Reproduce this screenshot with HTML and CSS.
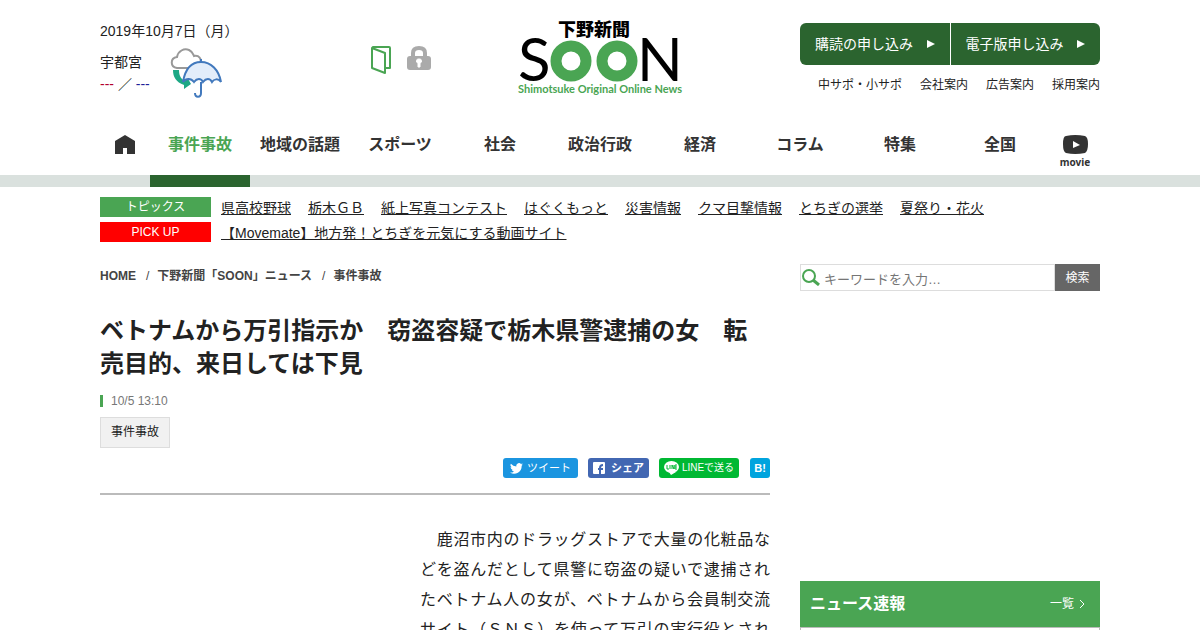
FILE: index.html
```html
<!DOCTYPE html>
<html lang="ja">

<head>
    <meta charset="utf-8">
    <meta name="viewport" content="width=device-width, initial-scale=1.0">
    <title>下野新聞 SOON</title>
    <link rel="stylesheet" href="styles.css">
</head>

<body>

    <header class="container header">
        <div class="header-left">
            <div class="info">
                <p class="date">2019年10月7日（月）</p>
                <div class="weather">
                    <div>
                        <p>宇都宮</p>
                        <p><span class="high">---</span> ／ <span class="low">---</span></p>
                    </div>
                    <svg class="weather-icon" width="52" height="50" viewBox="0 0 52 50" fill="none">
                        <path d="M7 20c-7-1-7-10 0-11C8 3 14 0 19 2c4 2 4 4 5 6 5-1 8 3 6 7l-9 5z" fill="#fff" stroke="#999" stroke-width="2" />
                        <path d="M3 22h6c0 6 2 9 6 11l2-4 4 7-7 5v-4C6 34 3 29 3 22z" fill="#1da885" />
                        <path d="M13 34c2-12 8-20 18-20s18 8 20 20c-3-4-7-3-9 0-2-4-6-4-9 0-2-4-6-4-9 0-3-4-8-4-11 0z" fill="#e3edfa" stroke="#4279bd" stroke-width="2" />
                        <path d="M31 11v3M31 34v11c0 5-6 5-6 0" stroke="#4279bd" stroke-width="2" />
                    </svg>
                </div>
            </div>
            <div class="tools">
                <a href="#" aria-label="紙面"><svg width="21" height="28" viewBox="0 0 21 28" fill="none" stroke="#4aa553" stroke-width="2" stroke-linejoin="round">
                        <path d="M1 2l13 5v20L1 22zM1 2l1-1h16q1 0 1 1v20h-5" />
                    </svg></a>
                <a href="#" aria-label="ログイン"><svg width="24" height="24" viewBox="0 0 24 24">
                        <path d="M6 12V7q0-5 6-5t6 5v5" fill="none" stroke="#aaa" stroke-width="4" />
                        <rect y="10" width="24" height="14" rx="3" fill="#aaa" />
                        <path d="M12 13a2 2 0 0 1 1 4v4h-2v-4a2 2 0 0 1 1-4z" fill="#fff" stroke="#fff" />
                    </svg></a>
            </div>
        </div>

        <a class="logo" href="#" aria-label="下野新聞 SOON">
            <svg width="160" height="74" viewBox="0 0 160 74">
                <text class="logo-paper" x="38" y="14">下野新聞</text>
                <text class="logo-letter" x="-2" y="59">S</text>
                <circle cx="51" cy="39" r="15" fill="none" stroke="#4aa553" stroke-width="11" />
                <circle cx="97" cy="39" r="15" fill="none" stroke="#4aa553" stroke-width="11" />
                <text class="logo-letter" x="117" y="59">N</text>
                <text class="logo-sub" x="-2" y="71">Shimotsuke Original Online News</text>
            </svg>
        </a>

        <div class="header-right">
            <div class="apply">
                <a href="#">購読の申し込み<svg width="8" height="8"><path d="M0 0l8 4-8 4z" fill="#fff" /></svg></a>
                <a href="#">電子版申し込み<svg width="8" height="8"><path d="M0 0l8 4-8 4z" fill="#fff" /></svg></a>
            </div>
            <div class="sublinks">
                <a href="#">中サポ・小サポ</a>
                <a href="#">会社案内</a>
                <a href="#">広告案内</a>
                <a href="#">採用案内</a>
            </div>
        </div>
    </header>

    <nav class="gnav">
        <div class="container gnav-list">
            <a class="small" href="#" aria-label="ホーム"><svg width="20" height="19" viewBox="0 0 20 19">
                    <path d="M10 0l10 6v13h-8v-6H8v6H0V6z" fill="#333" />
                </svg></a>
            <a class="active" href="#">事件事故</a>
            <a href="#">地域の話題</a>
            <a href="#">スポーツ</a>
            <a href="#">社会</a>
            <a href="#">政治行政</a>
            <a href="#">経済</a>
            <a href="#">コラム</a>
            <a href="#">特集</a>
            <a href="#">全国</a>
            <a class="small movie" href="#"><svg width="25" height="19" viewBox="0 0 25 19">
                    <path d="M3 1q9-2 19 0 3 1 3 8t-3 9q-10 2-19 0-3-1-3-9t3-8z" fill="#333" />
                    <path d="M10 6l7 4-7 3z" fill="#fff" />
                </svg>movie</a>
        </div>
    </nav>

    <div class="container topics">
        <div class="topics-row">
            <span class="label">トピックス</span>
            <a href="#">県高校野球</a>
            <a href="#">栃木ＧＢ</a>
            <a href="#">紙上写真コンテスト</a>
            <a href="#">はぐくもっと</a>
            <a href="#">災害情報</a>
            <a href="#">クマ目撃情報</a>
            <a href="#">とちぎの選挙</a>
            <a href="#">夏祭り・花火</a>
        </div>
        <div class="topics-row">
            <span class="label pickup">PICK UP</span>
            <a href="#">【Movemate】地方発！とちぎを元気にする動画サイト</a>
        </div>
    </div>

    <div class="container columns">
        <main>
            <div class="breadcrumb">
                <a href="#">HOME</a>
                <span>/</span>
                <a href="#">下野新聞「SOON」ニュース</a>
                <span>/</span>
                <a href="#">事件事故</a>
            </div>

            <h1>ベトナムから万引指示か　窃盗容疑で栃木県警逮捕の女　転売目的、来日しては下見</h1>
            <p class="time">10/5 13:10</p>
            <a class="tag" href="#">事件事故</a>

            <div class="share">
                <a class="twitter" href="#"><svg width="13" height="11" viewBox="0 0 24 20">
                        <path d="M24 2.400a10 10 0 0 1-2.800.8A5 5 0 0 0 23.300.4a10 10 0 0 1-3.100 1.200 4.900 4.900 0 0 0-8.400 4.500A14 14 0 0 1 1.700 1a4.900 4.900 0 0 0 1.500 6.600A5 5 0 0 1 1 7v.1a4.900 4.900 0 0 0 3.900 4.800 5 5 0 0 1-2.200.1 4.900 4.900 0 0 0 4.600 3.400A10 10 0 0 1 0 17.500 14 14 0 0 0 21.500 5z" fill="#fff" />
                    </svg>ツイート</a>
                <a class="facebook" href="#"><svg width="12" height="12" viewBox="0 0 12 12">
                        <rect width="12" height="12" rx="1" fill="#fff" />
                        <path d="M7 12V6q0-3 3-3M5 7h5" fill="none" stroke="#4267b2" stroke-width="2" />
                    </svg>シェア</a>
                <a class="line" href="#"><svg width="15" height="14" viewBox="0 0 15 14">
                        <ellipse cx="7.500" cy="6" rx="7.500" ry="6" fill="#fff" />
                        <path d="M5 11h7l-5 3z" fill="#fff" />
                        <path d="M3 4v4h2M6 4v4M8 8V4l2 4V4M13 4h-2v4h2M11 6h2" fill="none" stroke="#00b833" stroke-width="1" />
                    </svg>LINEで送る</a>
                <a class="hatena" href="#">B!</a>
            </div>

            <div class="article-body">
                <p>　鹿沼市内のドラッグストアで大量の化粧品などを盗んだとして県警に窃盗の疑いで逮捕されたベトナム人の女が、ベトナムから会員制交流サイト（ＳＮＳ）を使って万引の実行役とされ</p>
            </div>
        </main>

        <aside>
            <form class="search">
                <label class="search-box">
                    <svg width="18" height="17" viewBox="0 0 18 17" fill="none" stroke="#4aa553">
                        <circle cx="7" cy="7" r="6" stroke-width="2" />
                        <path d="M11 11l6 5" stroke-width="3" />
                    </svg>
                    <input type="text" placeholder="キーワードを入力…" aria-label="キーワード">
                </label>
                <button type="submit">検索</button>
            </form>

            <div class="banner"></div>

            <section class="news">
                <div class="news-head">
                    <h2>ニュース速報</h2>
                    <a href="#">一覧<svg width="5" height="8" fill="none" stroke="#fff"><path d="M0 0l4 4-4 4" /></svg></a>
                </div>
                <div class="news-list"></div>
            </section>
        </aside>
    </div>

</body>

</html>
```
FILE: styles.css
```css
* {
    box-sizing: border-box;
}

body {
    margin: 0;
    background-color: #fff;
    color: #222;
    font-family: "Liberation Sans", "Noto Sans CJK JP", sans-serif;
    font-size: 14px;
    line-height: 20px;
    text-spacing-trim: space-all;
}

h1,
h2,
p {
    margin: 0;
}

a {
    color: #222;
    text-decoration: none;
}

svg {
    display: block;
    flex-shrink: 0;
}

.container {
    max-width: 1000px;
    margin: 0 auto;
}

/* ---------- header ---------- */

.header {
    display: grid;
    grid-template-columns: 1fr 160px 1fr;
    padding: 22px 0 17px;
}

.header-left {
    display: flex;
    justify-content: space-between;
    padding-right: 89px;
}

.date {
    line-height: 18px;
}

.weather {
    display: flex;
    gap: 20px;
    margin-top: 8px;
    line-height: 22px;
}

.weather > div {
    padding-top: 3px;
}

.high {
    color: #b3002d;
}

.low {
    color: #1f1f99;
}

.tools {
    display: flex;
    align-items: flex-start;
    gap: 15px;
    padding-top: 24px;
}

.logo svg {
    overflow: visible;
}

.logo-paper {
    font: 900 18px "Noto Sans CJK JP", sans-serif;
}

.logo-letter {
    font: 60px Lato, sans-serif;
}

.logo-sub {
    font: bold 11px Lato, sans-serif;
    fill: #4aa553;
}

.header-right {
    width: 300px;
    margin-left: auto;
    padding-top: 1px;
}

.apply {
    display: flex;
    gap: 1px;
    border-radius: 6px;
    overflow: hidden;
}

.apply a {
    flex: 1;
    display: flex;
    align-items: center;
    justify-content: space-between;
    height: 42px;
    padding: 0 15px;
    background-color: #2b642f;
    color: #fff;
}

.sublinks {
    display: flex;
    justify-content: flex-end;
    gap: 18px;
    margin-top: 10px;
    font-size: 12px;
}

/* ---------- global nav ---------- */

.gnav {
    border-bottom: 12px solid #dae1de;
}

.gnav-list {
    display: flex;
    height: 60px;
}

.gnav a {
    flex: 2;
    height: 72px;
    padding-top: 20px;
    text-align: center;
    font-size: 16px;
    font-weight: bold;
    color: #333;
}

.gnav .small {
    flex: 1;
}

.gnav .small svg {
    margin: 0 auto;
}

.gnav .active {
    color: #4aa553;
    border-bottom: 12px solid #2b642f;
}

.gnav .movie {
    font-family: "Noto Sans", sans-serif;
    font-size: 10px;
    line-height: 17px;
}

/* ---------- topics ---------- */

.topics {
    padding-top: 10px;
}

.topics-row {
    display: flex;
    gap: 17px;
    height: 25px;
}

.topics-row a {
    text-decoration: underline;
    line-height: 22px;
}

.label {
    width: 111px;
    height: 20px;
    margin-right: -7px;
    background-color: #4aa553;
    color: #fff;
    font-size: 12px;
    text-align: center;
}

.pickup {
    background-color: #f00;
}

/* ---------- article ---------- */

.columns {
    display: flex;
    gap: 30px;
    padding-top: 17px;
}

main {
    flex: 1;
}

.breadcrumb {
    display: flex;
    gap: 8px;
    padding-top: 2px;
    font-size: 12px;
    color: #444;
}

.breadcrumb a {
    color: #444;
    font-weight: bold;
}

.breadcrumb span {
    padding-left: 2px;
}

h1 {
    margin-top: 28px;
    font-size: 24px;
    line-height: 33px;
}

.time {
    margin: 15px 0 10px;
    padding-left: 8px;
    border-left: 3px solid #4aa553;
    font-size: 12px;
    line-height: 12px;
    color: #777;
}

.tag {
    display: inline-block;
    padding: 0 10px;
    border: 1px solid #ddd;
    background-color: #f1f1f1;
    font-size: 12px;
    line-height: 29px;
    vertical-align: top;
}

.share {
    display: flex;
    justify-content: flex-end;
    gap: 10px;
    padding: 10px 0 15px;
    border-bottom: 2px solid #bbb;
}

.share a {
    display: flex;
    align-items: center;
    justify-content: center;
    gap: 4px;
    height: 20px;
    border-radius: 3px;
    color: #fff;
    font-size: 11px;
}

.share .twitter {
    width: 75px;
    background-color: #1b95e0;
}

.share .facebook {
    width: 61px;
    gap: 6px;
    background-color: #4267b2;
    font-weight: bold;
}

.share .line {
    width: 80px;
    gap: 3px;
    background-color: #00b833;
    font-size: 10px;
}

.share .hatena {
    width: 20px;
    margin-left: 1px;
    background-color: #00a4de;
    font-weight: bold;
}

.article-body {
    padding: 30px 0 30px 320px;
    font-size: 16px;
    line-height: 30px;
    text-align: justify;
    text-align-last: justify;
}

/* ---------- sidebar ---------- */

aside {
    width: 300px;
}

.search {
    display: flex;
    height: 27px;
}

.search-box {
    flex: 1;
    display: flex;
    align-items: center;
    gap: 4px;
    padding-left: 1px;
    border: 1px solid #ddd;
}

.search input {
    flex: 1;
    min-width: 0;
    padding: 4px 0 0;
    border: 0;
    font-family: inherit;
    font-size: 13px;
}

.search button {
    width: 45px;
    padding: 0 0 2px;
    border: 0;
    background-color: #666;
    color: #fff;
    font-family: inherit;
    font-size: 12px;
}

.banner {
    height: 250px;
    margin: 20px 0;
}

.news-head {
    display: flex;
    align-items: center;
    justify-content: space-between;
    height: 46px;
    padding: 0 15px 0 10px;
    background-color: #4aa553;
}

.news-head h2 {
    font-size: 16px;
    color: #fff;
}

.news-head a {
    display: flex;
    align-items: center;
    gap: 6px;
    font-size: 12px;
    color: #fff;
}

.news-list {
    height: 200px;
    border: 1px solid #bbb;
}
```
